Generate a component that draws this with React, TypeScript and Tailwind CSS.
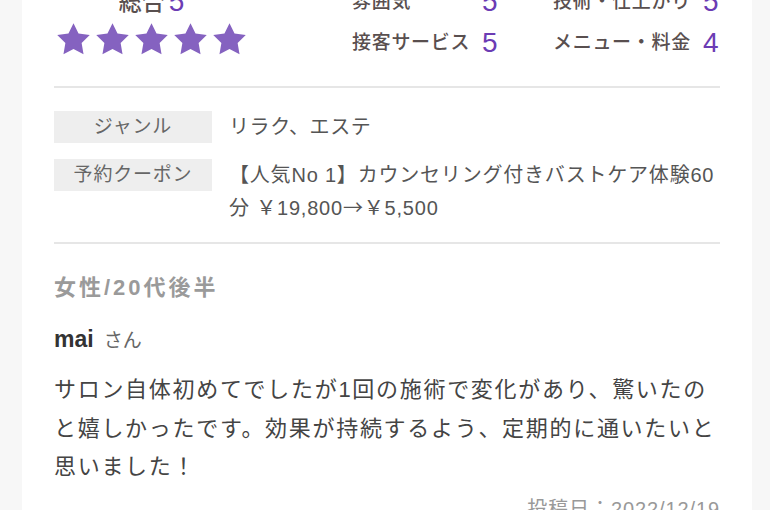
import { Fragment } from 'react';

const jp = "font-['Liberation_Sans','Noto_Sans_CJK_JP',sans-serif]";

const Star = () => (
  <svg width="39" height="39" viewBox="0 0 24 24" className="block">
    <polygon
      points="12,2 15.09,8.26 22,9.27 17,14.14 18.18,21.02 12,17.77 5.82,21.02 7,14.14 2,9.27 8.91,8.26"
      fill="#8562c0"
    />
  </svg>
);

const scores = [
  { label: '雰囲気', value: 5 },
  { label: '技術・仕上がり', value: 5 },
  { label: '接客サービス', value: 5 },
  { label: 'メニュー・料金', value: 4 },
];

const App = () => {
  return (
    <div className={`min-h-[510px] overflow-hidden bg-[#f7f7f7] pl-[22px] pr-[18px] ${jp}`}>
      <div className="-mt-[16px] bg-white px-[32px] pb-10">
        {/* ratings */}
        <div className="flex border-b-2 border-[#e6e6e6] pb-[25px]">
          <div className="flex w-[195px] flex-col items-center">
            <div className="flex h-[36px] items-center gap-[4px]">
              <span className="text-[23px] font-medium text-[#594f4f]">総合</span>
              <span className="text-[28px] text-[#6c3cb4]">5</span>
            </div>
            <div className="flex">
              <Star />
              <Star />
              <Star />
              <Star />
              <Star />
            </div>
          </div>
          <div className="ml-[103px] grid grid-cols-[130px_71px_150px_auto] gap-y-[5px]">
            {scores.map((s) => (
              <Fragment key={s.label}>
                <span className="flex h-[36px] items-center text-[19px] font-medium tracking-[0.7px] text-[#594f4f]">
                  {s.label}
                </span>
                <span className="flex h-[36px] items-center text-[28px] leading-none text-[#6c3cb4]">
                  {s.value}
                </span>
              </Fragment>
            ))}
          </div>
        </div>

        {/* genre / coupon */}
        <div className="flex flex-col gap-[16px] border-b-2 border-[#e6e6e6] pb-[18px] pt-[23px]">
          <div className="flex gap-[17px]">
            <div className="flex h-[32px] w-[158px] shrink-0 items-center justify-center bg-[#eeeeee] text-[19px] tracking-[0.8px] text-[#666]">
              ジャンル
            </div>
            <div className="flex-1 text-[20px] leading-[32px] tracking-[0.6px] text-[#555]">リラク、エステ</div>
          </div>
          <div className="flex gap-[17px]">
            <div className="flex h-[32px] w-[158px] shrink-0 items-center justify-center bg-[#eeeeee] text-[19px] tracking-[0.8px] text-[#666]">
              予約クーポン
            </div>
            <p className="flex-1 text-[20px] leading-[32px] tracking-[0.8px] text-[#555]">
              <span>【人気No 1】カウンセリング付きバストケア体験60</span>
              <br />
              <span>分 ￥19,800</span>
              <span className="font-['Noto_Sans_CJK_JP',sans-serif]">→</span>
              <span>￥5,500</span>
            </p>
          </div>
        </div>

        {/* review */}
        <div className="pt-[28px]">
          <div className="text-[22px] font-bold leading-[32px] tracking-[3px] text-[#9a9a9a]">女性/20代後半</div>
          <div className="mt-[19px] flex items-baseline gap-[10px] leading-[32px]">
            <span className="text-[23px] font-bold text-[#333]">mai</span>
            <span className="text-[19px] text-[#666]">さん</span>
          </div>
          <p className="mt-[14px] text-[22px] leading-[38.5px] tracking-[1.7px] text-[#444]">
            サロン自体初めてでしたが1回の施術で変化があり、驚いたの
            <br />
            と嬉しかったです。効果が持続するよう、定期的に通いたいと
            <br />
            思いました！
          </p>
          <div className="mt-[8px] text-right text-[20px] leading-[28px] tracking-[0.9px] text-[#999]">
            投稿日：2022/12/19
          </div>
        </div>
      </div>
    </div>
  );
};

export default App;
